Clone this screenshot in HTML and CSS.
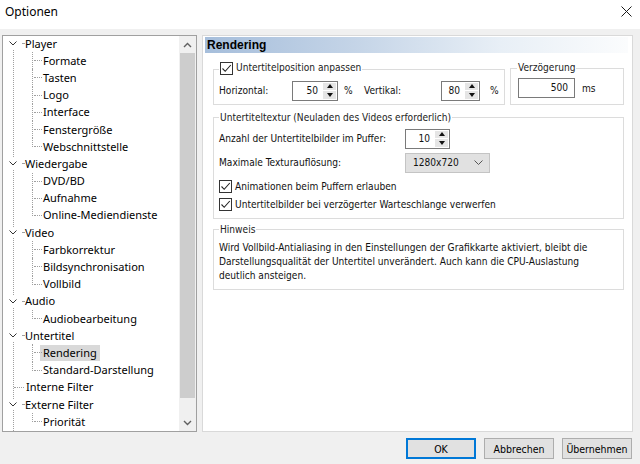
FILE: index.html
```html
<!DOCTYPE html>
<html lang="de">
<head>
<meta charset="utf-8">
<title>Optionen</title>
<link rel="stylesheet" href="styles.css">
</head>
<body>
<div class="window">
  <header class="titlebar">
    <span class="title">Optionen</span>
    <svg class="close" width="11" height="11" viewBox="0 0 11 11"><path d="M0.5 0.5L10.5 10.5M10.5 0.5L0.5 10.5" stroke="#1a1a1a" stroke-width="1" fill="none"/></svg>
  </header>
  <div class="main">
    <nav class="tree">
      <div class="tree-list">
        <div class="node top"><span class="exp"><svg width="8" height="5" viewBox="0 0 8 5"><path d="M0.5 0.5L4 4L7.5 0.5" stroke="#333" fill="none"/></svg></span><span class="tick"></span><span class="label">Player</span></div>
        <div class="node child"><span class="conn"></span><span class="label">Formate</span></div>
        <div class="node child"><span class="conn"></span><span class="label">Tasten</span></div>
        <div class="node child"><span class="conn"></span><span class="label">Logo</span></div>
        <div class="node child"><span class="conn"></span><span class="label">Interface</span></div>
        <div class="node child"><span class="conn"></span><span class="label">Fenstergröße</span></div>
        <div class="node child last"><span class="conn"></span><span class="label">Webschnittstelle</span></div>
        <div class="node top"><span class="exp"><svg width="8" height="5" viewBox="0 0 8 5"><path d="M0.5 0.5L4 4L7.5 0.5" stroke="#333" fill="none"/></svg></span><span class="tick"></span><span class="label">Wiedergabe</span></div>
        <div class="node child"><span class="conn"></span><span class="label">DVD/BD</span></div>
        <div class="node child"><span class="conn"></span><span class="label">Aufnahme</span></div>
        <div class="node child last"><span class="conn"></span><span class="label">Online-Mediendienste</span></div>
        <div class="node top"><span class="exp"><svg width="8" height="5" viewBox="0 0 8 5"><path d="M0.5 0.5L4 4L7.5 0.5" stroke="#333" fill="none"/></svg></span><span class="tick"></span><span class="label">Video</span></div>
        <div class="node child"><span class="conn"></span><span class="label">Farbkorrektur</span></div>
        <div class="node child"><span class="conn"></span><span class="label">Bildsynchronisation</span></div>
        <div class="node child last"><span class="conn"></span><span class="label">Vollbild</span></div>
        <div class="node top"><span class="exp"><svg width="8" height="5" viewBox="0 0 8 5"><path d="M0.5 0.5L4 4L7.5 0.5" stroke="#333" fill="none"/></svg></span><span class="tick"></span><span class="label">Audio</span></div>
        <div class="node child last"><span class="conn"></span><span class="label">Audiobearbeitung</span></div>
        <div class="node top"><span class="exp"><svg width="8" height="5" viewBox="0 0 8 5"><path d="M0.5 0.5L4 4L7.5 0.5" stroke="#333" fill="none"/></svg></span><span class="tick"></span><span class="label">Untertitel</span></div>
        <div class="node child"><span class="conn"></span><span class="label selected">Rendering</span></div>
        <div class="node child last"><span class="conn"></span><span class="label">Standard-Darstellung</span></div>
        <div class="node top leaf"><span class="hline"></span><span class="label">Interne Filter</span></div>
        <div class="node top"><span class="exp"><svg width="8" height="5" viewBox="0 0 8 5"><path d="M0.5 0.5L4 4L7.5 0.5" stroke="#333" fill="none"/></svg></span><span class="tick"></span><span class="label">Externe Filter</span></div>
        <div class="node child last"><span class="conn"></span><span class="label">Priorität</span></div>
      </div>
      <div class="scrollbar">
        <div class="sb-btn"><svg width="9" height="6" viewBox="0 0 9 6"><path d="M1 5L4.5 1.5L8 5" stroke="#606060" stroke-width="1.4" fill="none"/></svg></div>
        <div class="sb-track"><div class="sb-thumb"></div></div>
        <div class="sb-btn"><svg width="9" height="6" viewBox="0 0 9 6"><path d="M1 1L4.5 4.5L8 1" stroke="#606060" stroke-width="1.4" fill="none"/></svg></div>
      </div>
    </nav>
    <section class="panel">
      <div class="page-title">Rendering</div>
      <div class="page-body">
        <div class="row-top">
          <fieldset class="group g-pos">
            <legend><span class="check-item"><span class="cb"><svg width="11" height="11" viewBox="0 0 11 11"><path d="M1.5 5.5L4.2 8.3L9.8 2" stroke="#222" stroke-width="1.1" fill="none"/></svg></span><span>Untertitelposition anpassen</span></span></legend>
            <div class="field-row">
              <span class="lbl lbl-h">Horizontal:</span>
              <span class="spin spin-46"><span class="spin-val">50</span><span class="spin-btns"><span class="arr up"></span><span class="arr down"></span></span></span>
              <span class="unit unit-pct">%</span>
              <span class="lbl lbl-v">Vertikal:</span>
              <span class="spin spin-39"><span class="spin-val">80</span><span class="spin-btns"><span class="arr up"></span><span class="arr down"></span></span></span>
              <span class="unit unit-pct2">%</span>
            </div>
          </fieldset>
          <fieldset class="group g-delay">
            <legend>Verzögerung</legend>
            <div class="field-row">
              <span class="textbox">500</span>
              <span class="unit unit-ms">ms</span>
            </div>
          </fieldset>
        </div>
        <fieldset class="group g-tex">
          <legend>Untertiteltextur (Neuladen des Videos erforderlich)</legend>
          <div class="field-row">
            <span class="lbl lbl-wide">Anzahl der Untertitelbilder im Puffer:</span>
            <span class="spin spin-45"><span class="spin-val">10</span><span class="spin-btns"><span class="arr up"></span><span class="arr down"></span></span></span>
          </div>
          <div class="field-row row-select">
            <span class="lbl lbl-wide">Maximale Texturauflösung:</span>
            <span class="select"><span>1280x720</span><svg width="9" height="5" viewBox="0 0 9 5"><path d="M0.5 0.5L4.5 4.5L8.5 0.5" stroke="#555" fill="none"/></svg></span>
          </div>
          <div class="check-row first">
            <span class="check-item"><span class="cb"><svg width="11" height="11" viewBox="0 0 11 11"><path d="M1.5 5.5L4.2 8.3L9.8 2" stroke="#222" stroke-width="1.1" fill="none"/></svg></span><span>Animationen beim Puffern erlauben</span></span>
          </div>
          <div class="check-row">
            <span class="check-item"><span class="cb"><svg width="11" height="11" viewBox="0 0 11 11"><path d="M1.5 5.5L4.2 8.3L9.8 2" stroke="#222" stroke-width="1.1" fill="none"/></svg></span><span>Untertitelbilder bei verzögerter Warteschlange verwerfen</span></span>
          </div>
        </fieldset>
        <fieldset class="group g-note">
          <legend>Hinweis</legend>
          <p class="note">Wird Vollbild-Antialiasing in den Einstellungen der Grafikkarte aktiviert, bleibt die<br>Darstellungsqualität der Untertitel unverändert. Auch kann die CPU-Auslastung<br>deutlich ansteigen.</p>
        </fieldset>
      </div>
    </section>
  </div>
  <footer class="buttons">
    <button class="btn default">OK</button>
    <button class="btn">Abbrechen</button>
    <button class="btn">Übernehmen</button>
  </footer>
</div>
</body>
</html>
```
FILE: styles.css
```css
* { box-sizing: border-box; }
html, body { margin: 0; padding: 0; }
body {
  width: 640px;
  height: 464px;
  overflow: hidden;
  background: #f0f0f0;
  color: #000;
  font-family: "Noto Sans", sans-serif;
}
.window { display: flex; flex-direction: column; height: 464px; }

/* title bar */
.titlebar {
  height: 29px;
  background: #fff;
  display: flex;
  align-items: center;
  justify-content: space-between;
  padding: 0 8px 6px 5px;
  font-size: 12px;
}
.titlebar .title { color: #000; }
.close { margin-left: auto; }

/* main area */
.main {
  display: flex;
  gap: 5px;
  padding: 6px 7px 0 2px;
  height: 403px;
}

/* tree */
.tree {
  width: 195px;
  border: 1px solid #a0a0a0;
  background: #fff;
  display: flex;
}
.tree-list {
  flex: 1;
  position: relative;
  font-size: 11px;
  overflow: hidden;
}
.tree-list::before {
  content: "";
  position: absolute;
  left: 10px;
  top: 11px;
  bottom: 0;
  border-left: 1px dotted #a0a0a0;
}
.node {
  height: 17.2px;
  display: flex;
  align-items: center;
  position: relative;
  white-space: nowrap;
  top: -1px;
}
.exp {
  width: 19px;
  height: 11px;
  background: #fff;
  display: flex;
  align-items: center;
  justify-content: center;
}
.tick { width: 2px; height: 0; border-top: 1px dotted #a0a0a0; }
.hline { width: 10px; height: 0; margin-left: 11px; border-top: 1px dotted #a0a0a0; }
.label { line-height: 16px; padding: 0 1px; }
.leaf .label { padding-left: 2px; }
.conn {
  align-self: stretch;
  width: 10px;
  margin-left: 29px;
  border-left: 1px dotted #a0a0a0;
  position: relative;
}
.last .conn { align-self: flex-start; height: 9px; }
.conn::after {
  content: "";
  position: absolute;
  left: 1px;
  top: 8px;
  width: 8px;
  border-top: 1px dotted #a0a0a0;
}
.child .label { padding: 0 3px; margin-left: -2px; }
.label.selected { background: #d9d9d9; }

/* scrollbar */
.scrollbar {
  width: 17px;
  background: #f0f0f0;
  display: flex;
  flex-direction: column;
}
.sb-btn { height: 17px; display: flex; align-items: center; justify-content: center; }
.sb-track { flex: 1; padding: 0 1px; }
.sb-thumb { height: 345px; background: #cdcdcd; }

/* right panel */
.panel {
  flex: 1;
  border: 1px solid #d9d9d9;
  background: #fff;
  font-family: "DejaVu Sans Condensed", "DejaVu Sans", sans-serif;
  font-stretch: condensed;
  font-size: 10.1px;
  color: #111;
}
.page-title {
  margin: 1px 4px 0 2px;
  height: 16px;
  line-height: 16px;
  padding-left: 2px;
  font-family: "Liberation Sans", sans-serif;
  font-weight: bold;
  font-size: 12px;
  color: #000;
  background: linear-gradient(90deg, #a6bedb 0%, #c4d4e7 35%, #e8eff6 70%, #fbfcfd 100%);
}
.page-body { padding: 8px 8px 0 10px; }
.row-top { display: flex; gap: 5px; }

.group {
  margin: 0;
  min-width: 0;
  border: 1px solid #dcdcdc;
  padding: 3px 5px 3px 5px;
}
.group legend { padding: 0 1px; line-height: 14px; color: #222; }
.g-pos { flex: 0 0 292px; }
.g-delay { flex: 1; padding-left: 7px; }
.g-delay legend { margin-left: -1px; }
.g-tex { margin-top: 6px; padding-top: 4px; padding-bottom: 4px; }
.g-note { margin-top: 4px; padding-top: 4px; padding-bottom: 6px; }

.field-row { display: flex; align-items: center; height: 20px; }
.row-select { margin-top: 4px; }
.lbl { white-space: nowrap; }
.lbl-h { width: 73px; }
.lbl-v { width: 77px; }
.lbl-wide { width: 186px; }
.unit-pct { width: 20px; margin-left: 6px; }
.unit-pct2 { margin-left: 10px; }
.unit-ms { margin-left: 7px; }

.spin {
  display: flex;
  height: 20px;
  border: 1px solid #7a7a7a;
  background: #fff;
}
.spin-46 { width: 46px; }
.spin-39 { width: 39px; }
.spin-45 { width: 45px; }
.spin-val { flex: 1; text-align: right; padding-right: 5px; line-height: 18px; }
.spin-btns {
  width: 14px;
  display: flex;
  flex-direction: column;
  gap: 1px;
  padding: 1px 1px 1px 0;
}
.arr {
  flex: 1;
  background: #e5e5e5;
  display: flex;
  align-items: center;
  justify-content: center;
}
.arr.up::before {
  content: "";
  border-left: 3px solid transparent;
  border-right: 3px solid transparent;
  border-bottom: 4px solid #111;
}
.arr.down::before {
  content: "";
  border-left: 3px solid transparent;
  border-right: 3px solid transparent;
  border-top: 4px solid #111;
}
.textbox {
  width: 57px;
  height: 20px;
  border: 1px solid #7a7a7a;
  background: #fff;
  text-align: right;
  padding-right: 6px;
  line-height: 18px;
}
.select {
  width: 85px;
  height: 20px;
  border: 1px solid #c4c4c4;
  background: #e1e1e1;
  display: flex;
  align-items: center;
  justify-content: space-between;
  padding: 0 6px 0 7px;
}

.check-item { display: inline-flex; align-items: center; gap: 3px; white-space: nowrap; }
.cb {
  width: 13px;
  height: 13px;
  border: 1px solid #333;
  background: #fff;
  display: flex;
  align-items: center;
  justify-content: center;
}
.check-row { height: 18px; display: flex; align-items: center; }
.check-row.first { margin-top: 5px; }

.note { margin: 0; line-height: 14px; white-space: nowrap; }

/* buttons */
.buttons {
  display: flex;
  justify-content: flex-end;
  gap: 8px;
  padding: 6px 8px 0 0;
}
.btn {
  width: 70px;
  height: 21px;
  padding: 0;
  border: 1px solid #adadad;
  background: #e1e1e1;
  font-family: "DejaVu Sans Condensed", "DejaVu Sans", sans-serif;
  font-stretch: condensed;
  font-size: 10.5px;
  color: #000;
}
.btn.default { border-color: #0078d7; box-shadow: inset 0 0 0 1px #0078d7; }
```
